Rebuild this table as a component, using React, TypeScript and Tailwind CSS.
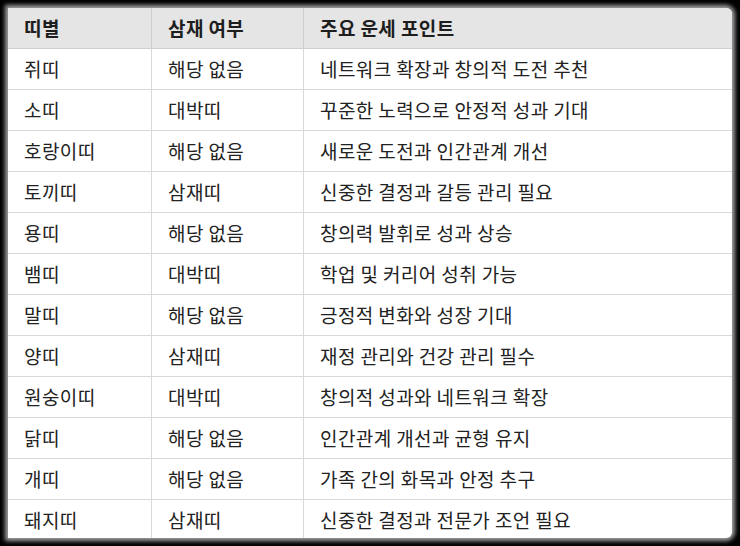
import React from "react";

const rows: [string, string, string][] = [
  ["쥐띠", "해당 없음", "네트워크 확장과 창의적 도전 추천"],
  ["소띠", "대박띠", "꾸준한 노력으로 안정적 성과 기대"],
  ["호랑이띠", "해당 없음", "새로운 도전과 인간관계 개선"],
  ["토끼띠", "삼재띠", "신중한 결정과 갈등 관리 필요"],
  ["용띠", "해당 없음", "창의력 발휘로 성과 상승"],
  ["뱀띠", "대박띠", "학업 및 커리어 성취 가능"],
  ["말띠", "해당 없음", "긍정적 변화와 성장 기대"],
  ["양띠", "삼재띠", "재정 관리와 건강 관리 필수"],
  ["원숭이띠", "대박띠", "창의적 성과와 네트워크 확장"],
  ["닭띠", "해당 없음", "인간관계 개선과 균형 유지"],
  ["개띠", "해당 없음", "가족 간의 화목과 안정 추구"],
  ["돼지띠", "삼재띠", "신중한 결정과 전문가 조언 필요"],
];

export default function App() {
  return (
    <div
      className="w-[740px] h-[546px] bg-black pt-[8px] pl-[8px] overflow-hidden"
      style={{ fontFamily: '"Noto Sans CJK KR", "Noto Sans", sans-serif' }}
    >
      <div className="relative w-[724px] h-[530px] bg-white overflow-hidden rounded-r-[6px] shadow-[0_0_4px_3px_#a0a0a0]">
        <div className="flex h-[41px] bg-[#e5e5e5] border-b border-[#cfcfcf] text-[19px] tracking-[0.4px] font-bold text-[#1e1e1e]">
          <div className="w-[144px] pl-[16px] flex items-center border-r border-[#cfcfcf]">띠별</div>
          <div className="w-[152px] pl-[16px] flex items-center border-r border-[#cfcfcf]">삼재 여부</div>
          <div className="flex-1 pl-[16px] flex items-center">주요 운세 포인트</div>
        </div>
        {rows.map((r, i) => (
          <div key={i} className="flex h-[41px] border-b border-[#d8d8d8] text-[19px] tracking-[0.4px] text-[#222]">
            <div className="w-[144px] pl-[16px] flex items-center border-r border-[#d8d8d8]">{r[0]}</div>
            <div className="w-[152px] pl-[16px] flex items-center border-r border-[#d8d8d8]">{r[1]}</div>
            <div className="flex-1 pl-[16px] flex items-center">{r[2]}</div>
          </div>
        ))}
      </div>
    </div>
  );
}
